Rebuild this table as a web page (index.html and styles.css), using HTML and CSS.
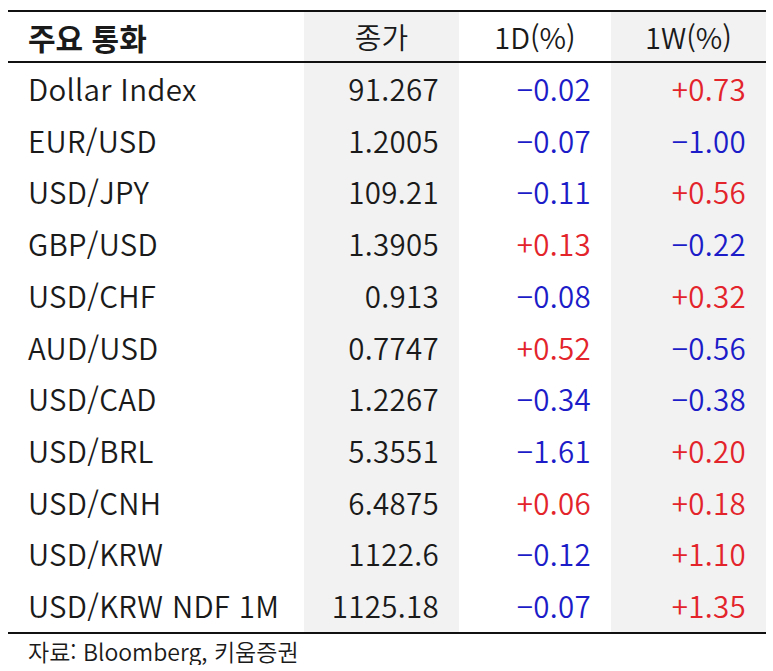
FILE: index.html
```html
<!DOCTYPE html>
<html lang="ko">
<head>
<meta charset="utf-8">
<link rel="stylesheet" href="styles.css">
</head>
<body>
<table class="fx">
  <colgroup>
    <col class="c-name"><col class="c-close"><col class="c-d"><col class="c-w">
  </colgroup>
  <thead>
    <tr><th class="name">주요 통화</th><th class="shade">종가</th><th>1D(%)</th><th class="shade">1W(%)</th></tr>
  </thead>
  <tbody>
    <tr><td class="name">Dollar Index</td><td class="shade">91.267</td><td class="neg">−0.02</td><td class="shade pos">+0.73</td></tr>
    <tr><td class="name">EUR/USD</td><td class="shade">1.2005</td><td class="neg">−0.07</td><td class="shade neg">−1.00</td></tr>
    <tr><td class="name">USD/JPY</td><td class="shade">109.21</td><td class="neg">−0.11</td><td class="shade pos">+0.56</td></tr>
    <tr><td class="name">GBP/USD</td><td class="shade">1.3905</td><td class="pos">+0.13</td><td class="shade neg">−0.22</td></tr>
    <tr><td class="name">USD/CHF</td><td class="shade">0.913</td><td class="neg">−0.08</td><td class="shade pos">+0.32</td></tr>
    <tr><td class="name">AUD/USD</td><td class="shade">0.7747</td><td class="pos">+0.52</td><td class="shade neg">−0.56</td></tr>
    <tr><td class="name">USD/CAD</td><td class="shade">1.2267</td><td class="neg">−0.34</td><td class="shade neg">−0.38</td></tr>
    <tr><td class="name">USD/BRL</td><td class="shade">5.3551</td><td class="neg">−1.61</td><td class="shade pos">+0.20</td></tr>
    <tr><td class="name">USD/CNH</td><td class="shade">6.4875</td><td class="pos">+0.06</td><td class="shade pos">+0.18</td></tr>
    <tr><td class="name">USD/KRW</td><td class="shade">1122.6</td><td class="neg">−0.12</td><td class="shade pos">+1.10</td></tr>
    <tr><td class="name">USD/KRW NDF 1M</td><td class="shade">1125.18</td><td class="neg">−0.07</td><td class="shade pos">+1.35</td></tr>
  </tbody>
</table>
<p class="source">자료: Bloomberg, 키움증권</p>
</body>
</html>
```

FILE: styles.css
```css
html, body {
  margin: 0;
  padding: 0;
  background: #ffffff;
}
body {
  padding: 10px 7px 0 8px;
  font-family: "Noto Sans CJK KR", "Noto Sans", sans-serif;
  color: #1a1a1a;
}
.fx {
  width: 758px;
  border-collapse: collapse;
  table-layout: fixed;
  border-top: 2px solid #111;
  border-bottom: 2px solid #111;
}
.c-name { width: 296px; }
.c-close { width: 155px; }
.c-d { width: 152px; }
.c-w { width: 155px; }
.fx th {
  height: 49px;
  padding: 0;
  font-size: 29px;
  font-weight: 350;
  text-align: center;
  border-bottom: 2px solid #111;
  vertical-align: middle;
  line-height: 1;
}
.fx th.name {
  text-align: left;
  padding-left: 20px;
  font-size: 30px;
  font-weight: 700;
}
.fx td {
  height: 51.7px;
  padding: 0 20px 0 0;
  font-size: 29.5px;
  font-weight: 350;
  letter-spacing: 0.3px;
  text-align: right;
  vertical-align: middle;
  line-height: 1;
  white-space: nowrap;
}
.fx td.name {
  text-align: left;
  padding: 0 0 0 20px;
}
.shade { background: #f2f2f2; }
.neg { color: #1c1cc8; }
.pos { color: #e3242b; }
.source {
  margin: 4px 0 0 20px;
  font-size: 23px;
  font-weight: 350;
  line-height: 1.2;
  color: #1a1a1a;
}
```
